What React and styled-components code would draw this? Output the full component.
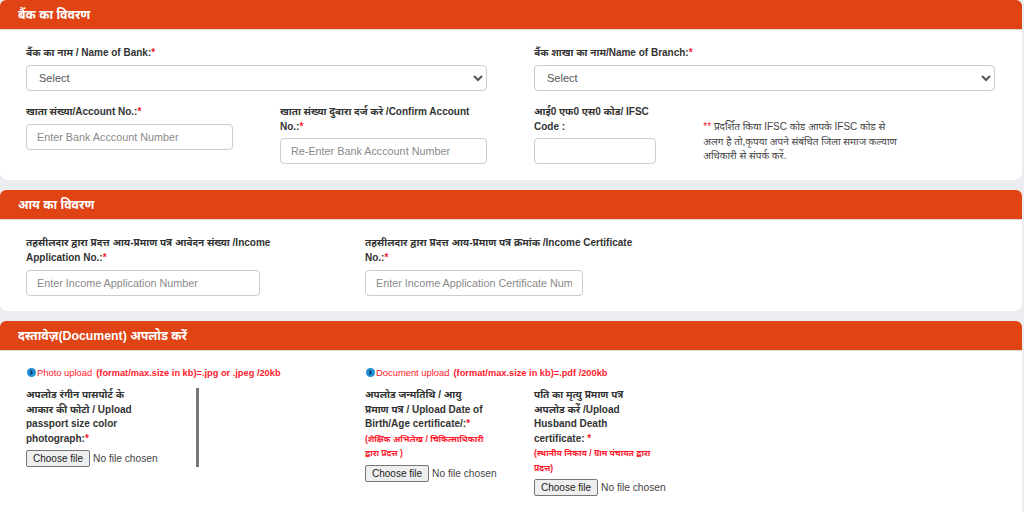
import React from 'react';
import styled, { createGlobalStyle } from 'styled-components';

const GlobalStyle = createGlobalStyle`
  html, body {
    margin: 0;
    padding: 0;
    background: #ecedf0;
    font-family: "Liberation Sans", "Noto Sans", "DejaVu Sans", sans-serif;
    overflow: hidden;
  }
`;

const Page = styled.div`
  width: 1022px;
  display: flex;
  flex-direction: column;
  gap: 10px;
`;

const Card = styled.section`
  background: #fff;
  border-radius: 6px 6px 8px 8px;
  overflow: hidden;
`;

const CardHeader = styled.h2`
  margin: 0;
  height: 30px;
  padding-left: 18px;
  background: #e04314;
  border-bottom: 1px solid #d9d9d9;
  box-sizing: border-box;
  color: #fff;
  font-size: 12.3px;
  font-weight: 700;
  line-height: 31px;
`;

const CardBody = styled.div`
  padding: ${(p) => p.$padding};
`;

const FormGrid = styled.div`
  display: grid;
  grid-template-columns: repeat(12, 1fr);
  column-gap: 47px;
  row-gap: 14.5px;
`;

const Col = styled.div`
  grid-column: span ${(p) => p.$span};
  min-width: 0;
`;

const Label = styled.label`
  display: block;
  margin-bottom: ${(p) => p.$gap || 4}px;
  color: #333;
  font-size: 10px;
  font-weight: 700;
  line-height: 14.5px;
`;

const Star = styled.span`
  color: #f5142c;
`;

const Select = styled.select`
  display: block;
  width: 100%;
  height: 26px;
  padding: 0 8px;
  background: #fff;
  border: 1px solid #ccc;
  border-radius: 4px;
  box-sizing: border-box;
  color: #555;
  font-family: inherit;
  font-size: 11px;
`;

const Input = styled.input`
  display: block;
  width: ${(p) => p.$width || '100%'};
  height: 26px;
  padding: 0 10px;
  background: #fff;
  border: 1px solid #ccc;
  border-radius: 4px;
  box-sizing: border-box;
  color: #555;
  font-family: inherit;
  font-size: 10.8px;

  &::placeholder {
    color: #8a8a8a;
    opacity: 1;
  }
`;

const Note = styled.p`
  margin: 15px 0 0;
  width: 200px;
  color: #444;
  font-size: 10px;
  line-height: 14.5px;
`;

const IncomeRow = styled.div`
  display: flex;
`;

const IncomeField = styled.div`
  width: ${(p) => p.$width}px;
  flex: none;
`;

const IncomeLabel = styled(Label)`
  width: ${(p) => p.$labelWidth}px;
`;

const UploadRow = styled.div`
  display: flex;
`;

const UploadGroup = styled.div`
  width: ${(p) => p.$width}px;
  flex: none;
`;

const Hint = styled.div`
  display: flex;
  align-items: center;
  gap: 1px;
  height: 15px;
  margin-bottom: 8px;
  padding-left: 1px;
  color: #ff1a2e;
  font-size: 9.4px;
  white-space: nowrap;
`;

const HintBold = styled.b`
  margin-left: 3px;
  font-size: 9.25px;
`;

const UploadCols = styled.div`
  display: flex;
  align-items: flex-start;
`;

const UploadCol = styled.div`
  width: ${(p) => p.$width}px;
  flex: none;
  box-sizing: border-box;
  ${(p) => p.$divided && 'border-right: 3px solid #777;'}
`;

const UploadLabel = styled(Label)`
  width: ${(p) => p.$labelWidth || 120}px;
`;

const SubNote = styled.span`
  display: block;
  color: #ff1a2e;
  font-size: 8.5px;
  line-height: 14.5px;
`;

const FilePicker = styled.div`
  display: flex;
  align-items: center;
  gap: 3px;
  color: #444;
  font-size: 10.2px;
`;

const FileButton = styled.button`
  height: 17px;
  padding: 0 6px;
  background: #efefef;
  border: 1px solid #767676;
  border-radius: 2px;
  color: #222;
  font-family: inherit;
  font-size: 10px;
`;

const InfoIcon = () => (
  <svg width="9" height="9" viewBox="0 0 10 10">
    <circle cx="5" cy="5" r="5" fill="#1f8fd6" />
    <path d="M3.6 2.8 5.8 5 3.6 7.2" fill="none" stroke="#12305a" strokeWidth="1.4" />
  </svg>
);

const FileField = () => (
  <FilePicker>
    <FileButton type="button">Choose file</FileButton>
    <span>No file chosen</span>
  </FilePicker>
);

export default function App() {
  return (
    <>
      <GlobalStyle />
      <Page>
        <Card>
          <CardHeader>बैंक का विवरण</CardHeader>
          <CardBody $padding="16px 27px 16px 26px">
            <FormGrid>
              <Col $span={6}>
                <Label>बैंक का नाम / Name of Bank:<Star>*</Star></Label>
                <Select><option>Select</option></Select>
              </Col>
              <Col $span={6}>
                <Label>बैंक शाखा का नाम/Name of Branch:<Star>*</Star></Label>
                <Select><option>Select</option></Select>
              </Col>
              <Col $span={3}>
                <Label>खाता संख्या/Account No.:<Star>*</Star></Label>
                <Input placeholder="Enter Bank Acccount Number" />
              </Col>
              <Col $span={3}>
                <Label>खाता संख्या दुबारा दर्ज करे /Confirm Account No.:<Star>*</Star></Label>
                <Input placeholder="Re-Enter Bank Acccount Number" />
              </Col>
              <Col $span={2}>
                <Label>आई0 एफ0 एस0 कोड/ IFSC Code :</Label>
                <Input />
              </Col>
              <Col $span={4}>
                <Note>
                  <Star>**</Star> प्रदर्शित किया IFSC कोड आपके IFSC कोड से अलग है तो,कृपया अपने संबंधित जिला समाज कल्याण अधिकारी से संपर्क करें.
                </Note>
              </Col>
            </FormGrid>
          </CardBody>
        </Card>

        <Card>
          <CardHeader>आय का विवरण</CardHeader>
          <CardBody $padding="16px 27px 15px 26px">
            <IncomeRow>
              <IncomeField $width={339}>
                <IncomeLabel $labelWidth={248} $gap={5}>तहसीलदार द्वारा प्रदत्त आय-प्रमाण पत्र आवेदन संख्या /Income Application No.:<Star>*</Star></IncomeLabel>
                <Input $width="234px" placeholder="Enter Income Application Number" />
              </IncomeField>
              <IncomeField $width={300}>
                <IncomeLabel $labelWidth={270} $gap={5}>तहसीलदार द्वारा प्रदत्त आय-प्रमाण पत्र क्रमांक /Income Certificate No.:<Star>*</Star></IncomeLabel>
                <Input $width="218px" placeholder="Enter Income Application Certificate Number" />
              </IncomeField>
            </IncomeRow>
          </CardBody>
        </Card>

        <Card>
          <CardHeader>दस्तावेज़(Document) अपलोड करें</CardHeader>
          <CardBody $padding="14px 27px 29px 26px">
            <UploadRow>
              <UploadGroup $width={339}>
                <Hint>
                  <InfoIcon />Photo upload <HintBold>(format/max.size in kb)=.jpg or .jpeg /20kb</HintBold>
                </Hint>
                <UploadCols>
                  <UploadCol $width={173} $divided>
                    <UploadLabel $labelWidth={115}>अपलोड रंगीन पासपोर्ट के आकार की फोटो / Upload passport size color photograph:<Star>*</Star></UploadLabel>
                    <FileField />
                  </UploadCol>
                </UploadCols>
              </UploadGroup>
              <UploadGroup $width={330}>
                <Hint>
                  <InfoIcon />Document upload <HintBold>(format/max.size in kb)=.pdf /200kb</HintBold>
                </Hint>
                <UploadCols>
                  <UploadCol $width={169}>
                    <UploadLabel>
                      अपलोड जन्मतिथि / आयु प्रमाण पत्र / Upload Date of Birth/Age certificate/:<Star>*</Star>
                      <SubNote>(शैक्षिक अभिलेख / चिकित्साधिकारी द्वारा प्रदत्त )</SubNote>
                    </UploadLabel>
                    <FileField />
                  </UploadCol>
                  <UploadCol $width={160}>
                    <UploadLabel>
                      पति का मृत्यु प्रमाण पत्र अपलोड करें /Upload Husband Death certificate: <Star>*</Star>
                      <SubNote>(स्थानीय निकाय / ग्राम पंचायत द्वारा प्रदत्त)</SubNote>
                    </UploadLabel>
                    <FileField />
                  </UploadCol>
                </UploadCols>
              </UploadGroup>
            </UploadRow>
          </CardBody>
        </Card>
      </Page>
    </>
  );
}
